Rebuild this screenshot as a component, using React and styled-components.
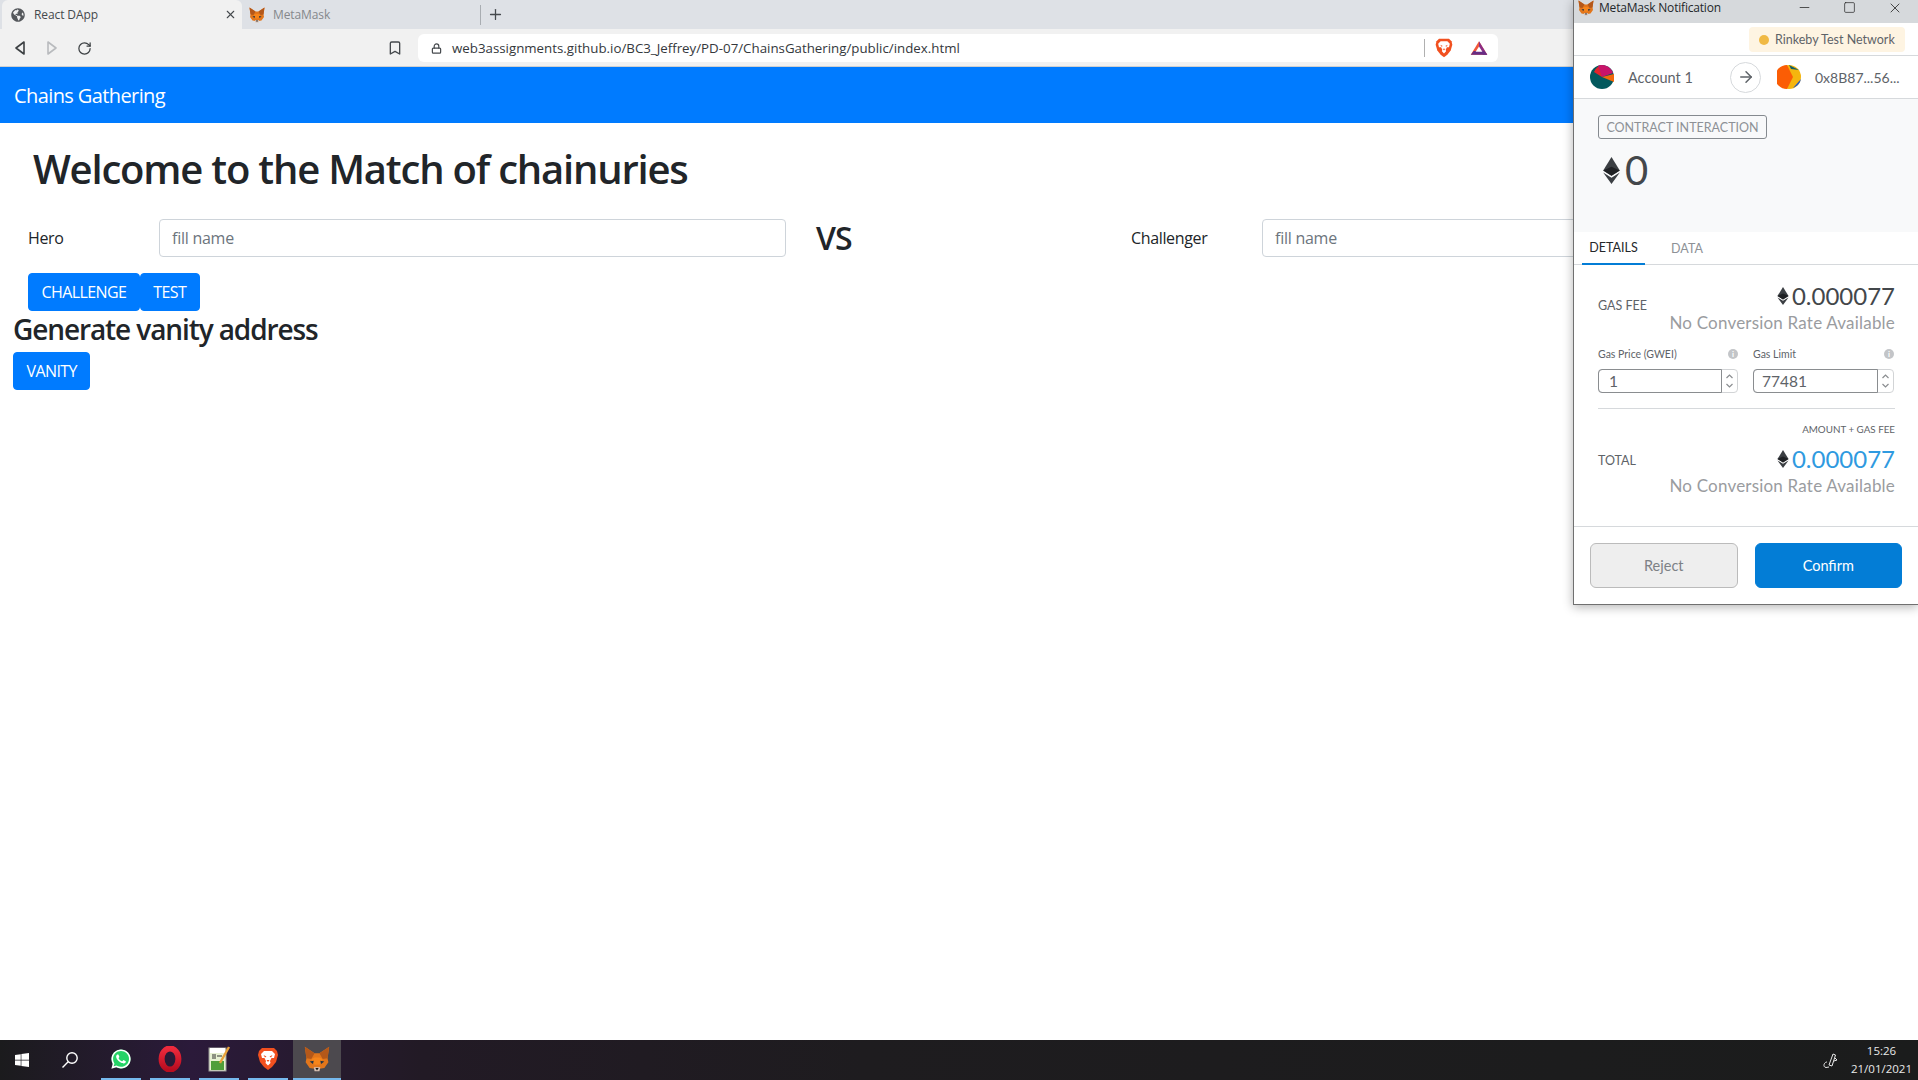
import React from "react";
import styled, { createGlobalStyle } from "styled-components";
import { FaGlobeAmericas, FaWhatsapp, FaWindows } from "react-icons/fa";
import { ArrowRight, Bookmark, Lock, Minus, Plus, RotateCw, Square, X } from "lucide-react";

const GlobalStyle = createGlobalStyle`
  html, body {
    margin: 0;
    padding: 0;
    background: #fff;
  }
  * {
    box-sizing: border-box;
  }
`;

const uiFont = `"Open Sans", "Noto Sans", sans-serif`;
const mmFont = `Lato, "Noto Sans", sans-serif`;

const Page = styled.div`
  width: 1918px;
  height: 1080px;
  position: relative;
  overflow: hidden;
  display: flex;
  flex-direction: column;
  font-family: ${uiFont};
  color: #212529;
`;

const TabBar = styled.div`
  height: 29px;
  background: #dee1e6;
  display: flex;
  align-items: stretch;
  padding-left: 2px;
  font-size: 12px;
  letter-spacing: -0.1px;
`;

const Tab = styled.div`
  width: ${(p) => p.$width}px;
  display: flex;
  align-items: center;
  gap: ${(p) => p.$gap}px;
  padding: 0 5px 0 ${(p) => p.$pad}px;
  color: ${(p) => (p.$active ? "#45494d" : "#85888c")};
  background: ${(p) => (p.$active ? "#f1f1f1" : "transparent")};
  border-radius: 6px 6px 0 0;
`;

const TabTitle = styled.span`
  flex: 1;
`;

const TabSep = styled.div`
  width: 1px;
  height: 20px;
  margin: 5px 6px 0 0;
  background: #a9adb2;
`;

const NewTab = styled.div`
  display: flex;
  align-items: center;
  color: #45494d;
`;

const Toolbar = styled.div`
  height: 38px;
  background: #f1f1f1;
  border-bottom: 1px solid #d0d0d0;
  display: flex;
  align-items: center;
  padding: 1px 0 0 13px;
`;

const NavIcons = styled.div`
  display: flex;
  align-items: center;
  gap: 18px;
  color: #3c4043;
`;

const BookmarkWrap = styled.div`
  margin-left: 295px;
  width: 31px;
  display: flex;
  color: #45494d;
`;

const AddressBox = styled.div`
  width: 1080px;
  height: 28px;
  background: #fff;
  border-radius: 6px;
  display: flex;
  align-items: center;
  padding: 0 10px 0 13px;
  font-size: 13.3px;
  color: #34383c;
  gap: 8px;
`;

const Url = styled.span`
  flex: 1;
  padding-left: 2px;
`;

const AddrSep = styled.div`
  width: 1px;
  height: 18px;
  background: #b0b0b0;
  margin-right: 1px;
`;

const AddrIcons = styled.div`
  display: flex;
  align-items: center;
  gap: 16px;
`;

const NavBar = styled.div`
  height: 56px;
  background: #007bff;
  color: #fff;
  font-size: 20px;
  letter-spacing: -0.6px;
  display: flex;
  align-items: center;
  padding: 0 14px;
`;

const Content = styled.main`
  flex: 1;
  padding: 0 13px;
`;

const Title = styled.h1`
  margin: 0;
  padding: 22px 0 0 20px;
  font-size: 40px;
  line-height: 48px;
  font-weight: 600;
  letter-spacing: -1.2px;
`;

const MatchRow = styled.div`
  display: grid;
  grid-template-columns: 131px 627px 345px 131px 627px;
  align-items: center;
  height: 38px;
  margin: 23px 0 0 15px;
  font-size: 16px;
  letter-spacing: -0.35px;
`;

const FieldLabel = styled.label`
  display: block;
`;

const NameInput = styled.input`
  width: 100%;
  height: 38px;
  padding: 6px 12px;
  font-family: ${uiFont};
  font-size: 16px;
  letter-spacing: -0.25px;
  color: #495057;
  border: 1px solid #ced4da;
  border-radius: 4px;
  &::placeholder {
    color: #6c757d;
  }
`;

const Versus = styled.div`
  padding-left: 30px;
  font-size: 32px;
  font-weight: 600;
  letter-spacing: -1px;
`;

const Buttons = styled.div`
  display: flex;
  margin: 19px 0 0 15px;
`;

const Button = styled.button`
  height: 38px;
  padding: 0 12.5px;
  font-family: ${uiFont};
  font-size: 16px;
  letter-spacing: -0.6px;
  color: #fff;
  background: #007bff;
  border: 1px solid #007bff;
  border-radius: 4px;
`;

const SubTitle = styled.h2`
  margin: 0;
  font-size: 28px;
  line-height: 36px;
  font-weight: 600;
  letter-spacing: -1.1px;
`;

const VanityWrap = styled.div`
  margin-top: 5px;
`;

const Taskbar = styled.div`
  height: 40px;
  display: flex;
  align-items: stretch;
  background: linear-gradient(90deg, #1b1b1d 0%, #2b1a3a 10%, #221a25 22%, #1e1c1f 45%, #1b1c1c 100%);
`;

const StartCell = styled.div`
  width: ${(p) => p.$width}px;
  padding-right: ${(p) => p.$trim || 0}px;
  display: flex;
  align-items: center;
  justify-content: center;
  color: #fff;
`;

const TaskApp = styled.div`
  width: ${(p) => (p.$active ? 48 : 40)}px;
  margin-right: ${(p) => (p.$last ? 5 : 9)}px;
  display: flex;
  align-items: center;
  justify-content: center;
  background: ${(p) => (p.$active ? "#4c494e" : "transparent")};
  border-bottom: 2px solid #76b9ed;
`;

const Tray = styled.div`
  margin-left: auto;
  display: flex;
  align-items: center;
  gap: 12px;
  padding-right: 6px;
  color: #e8e8e8;
`;

const Clock = styled.div`
  font-size: 11.5px;
  line-height: 18px;
  text-align: center;
`;

const Popup = styled.aside`
  position: absolute;
  top: 0;
  left: 1573px;
  width: 345px;
  height: 605px;
  display: flex;
  flex-direction: column;
  background: #fff;
  border-left: 1px solid #707070;
  border-bottom: 1px solid #707070;
  box-shadow: 0 2px 10px rgba(0, 0, 0, 0.3);
  font-family: ${mmFont};
`;

const PopupTitle = styled.div`
  height: 23px;
  flex: none;
  background: #d6d9dc;
  display: flex;
  align-items: center;
  padding: 0 0 8px 4px;
  gap: 5px;
  font-family: ${uiFont};
  font-size: 12px;
  letter-spacing: -0.2px;
  color: #24272a;
`;

const TitleText = styled.span`
  flex: 1;
`;

const WindowButtons = styled.div`
  display: flex;
  align-items: center;
  gap: 31px;
  padding-right: 15px;
  color: #222;
`;

const NetworkRow = styled.div`
  height: 33px;
  flex: none;
  display: flex;
  justify-content: flex-end;
  padding: 4px 13px 0 0;
  border-bottom: 1px solid #d6d9dc;
`;

const NetworkPill = styled.div`
  height: 25px;
  width: 156px;
  display: flex;
  align-items: center;
  gap: 6px;
  padding-left: 10px;
  font-size: 12.5px;
  color: #5e6368;
  background: #fef4e2;
  border-radius: 4px;
`;

const NetworkDot = styled.span`
  width: 10px;
  height: 10px;
  border-radius: 50%;
  background: #f0b944;
`;

const AccountRow = styled.div`
  height: 43px;
  flex: none;
  display: flex;
  align-items: center;
  padding-left: 16px;
  border-bottom: 1px solid #d6d9dc;
  font-size: 14.5px;
  color: #5e6368;
`;

const AccountName = styled.span`
  width: ${(p) => p.$width}px;
  margin-left: 14px;
  white-space: nowrap;
`;

const ArrowDot = styled.div`
  width: 31px;
  height: 31px;
  flex: none;
  border: 1px solid #d6d9dc;
  border-radius: 50%;
  background: #fff;
  display: flex;
  align-items: center;
  justify-content: center;
  color: #5e6368;
  margin-right: 16px;
`;

const AddressName = styled(AccountName)`
  font-size: 14px;
`;

const Summary = styled.div`
  height: 133px;
  flex: none;
  padding: 16px 0 0 24px;
  background: #f8f9fa;
`;

const Chip = styled.div`
  width: 169px;
  height: 24px;
  display: flex;
  align-items: center;
  justify-content: center;
  border: 1px solid #858a8f;
  border-radius: 3px;
  font-size: 12.5px;
  color: #8d9196;
`;

const BigAmount = styled.div`
  margin: 7px 0 0 5px;
  display: flex;
  align-items: center;
  gap: 5px;
  font-size: 40px;
  line-height: 48px;
  font-weight: 400;
  color: #43474b;
`;

const PopupTabs = styled.div`
  height: 33px;
  flex: none;
  display: flex;
  padding-left: 8px;
  border-bottom: 1px solid #d6d9dc;
  font-size: 12.5px;
`;

const PopupTab = styled.div`
  width: ${(p) => p.$width}px;
  display: flex;
  align-items: center;
  justify-content: center;
  margin-right: ${(p) => p.$gap || 0}px;
  color: ${(p) => (p.$active ? "#24272a" : "#8d9196")};
  height: 33px;
  border-bottom: ${(p) => (p.$active ? "2px solid #037dd6" : "none")};
`;

const Details = styled.div`
  flex: 1;
  padding: 0 23px 0 24px;
`;

const FeeRow = styled.div`
  display: flex;
  justify-content: space-between;
  align-items: flex-start;
  margin-top: ${(p) => p.$top}px;
`;

const FeeLabel = styled.div`
  font-size: 12.5px;
  color: #5e6368;
  padding-top: ${(p) => p.$pad || 0}px;
`;

const FeeValues = styled.div`
  text-align: right;
`;

const Amount = styled.div`
  display: flex;
  justify-content: flex-end;
  align-items: center;
  gap: 3px;
  height: 27px;
  font-size: 24px;
  color: ${(p) => (p.$accent ? "#2f9ae0" : "#43474b")};
`;

const Rate = styled.div`
  margin-top: 1px;
  font-size: 17px;
  letter-spacing: 0.2px;
  line-height: 26px;
  color: #9a9ca0;
`;

const GasGrid = styled.div`
  display: grid;
  grid-template-columns: 140px 141px;
  column-gap: 15px;
  margin-top: 10px;
`;

const GasLabel = styled.div`
  display: flex;
  justify-content: space-between;
  align-items: center;
  height: 16px;
  font-size: 10.5px;
  color: #5e6368;
`;

const InfoDot = styled.span`
  width: 10px;
  height: 10px;
  border-radius: 50%;
  background: #c3c5c8;
  color: #fff;
  font-size: 8px;
  line-height: 10px;
  font-weight: 700;
  text-align: center;
`;

const GasInput = styled.div`
  height: 24px;
  margin-top: 7px;
  display: flex;
  border: 1px solid #d2d4d6;
  border-radius: 4px;
`;

const GasValue = styled.div`
  flex: 1;
  margin: -1px 0 -1px -1px;
  padding-left: ${(p) => p.$pad}px;
  display: flex;
  align-items: center;
  font-size: 15.5px;
  color: #5e6368;
  border: 1px solid #8a8d90;
  border-radius: 4px 0 0 4px;
`;

const Stepper = styled.div`
  width: 15px;
  display: flex;
  align-items: center;
  justify-content: center;
`;

const Divider = styled.div`
  height: 1px;
  margin-top: 15px;
  background: #d6d9dc;
`;

const SumHint = styled.div`
  margin-top: 14px;
  font-size: 9.8px;
  line-height: 13px;
  text-align: right;
  color: #5e6368;
`;

const PopupFooter = styled.div`
  height: 78px;
  flex: none;
  display: flex;
  gap: 17px;
  padding: 16px 16px 0;
  border-top: 1px solid #d6d9dc;
`;

const FooterButton = styled.button`
  flex: 1;
  height: 45px;
  font-family: ${mmFont};
  font-size: 14.5px;
  border-radius: 6px;
  color: ${(p) => (p.$primary ? "#fff" : "#7d8186")};
  background: ${(p) => (p.$primary ? "#037dd6" : "#eeeeee")};
  border: 1px solid ${(p) => (p.$primary ? "#037dd6" : "#bbbbbb")};
`;

const Fox = ({ size = 16 }) => (
  <svg width={size} height={size} viewBox="0 0 32 32">
    <polygon points="1,1 13,9 19,9 31,1 29,15 30,20 25,27 19,28 13,28 7,27 2,20 3,15" fill="#e2761b" />
    <polygon points="1,1 13,9 9,16 3,15" fill="#b4581a" />
    <polygon points="31,1 19,9 23,16 29,15" fill="#b4581a" />
    <polygon points="9,16 13,14 19,14 23,16 19,23 13,23" fill="#f6851b" />
    <polygon points="7,19 12,18 11,22" fill="#233447" />
    <polygon points="25,19 20,18 21,22" fill="#233447" />
    <polygon points="12,26 20,26 19,31 13,31" fill="#d7c1b3" />
    <polygon points="14,27 18,27 16,30" fill="#161616" />
  </svg>
);

const BraveLion = ({ size = 20 }) => (
  <svg width={size} height={size} viewBox="0 0 24 24">
    <path d="M6 1 H18 L21 4 L22 8 L20 15 L16 20 L12 23 L8 20 L4 15 L2 8 L3 4 Z" fill="#f1501f" />
    <path d="M8 4 H16 L19 7 L18 11 L15.5 11 L14 14 L14.5 16 L12 18.5 L9.5 16 L10 14 L8.5 11 L6 11 L5 7 Z" fill="#fff" />
    <path d="M7.5 8 L10.5 9.5 L9 10.5 Z M16.5 8 L13.5 9.5 L15 10.5 Z" fill="#f1501f" />
    <path d="M10.5 13 H13.5 L12 15 Z" fill="#f1501f" />
  </svg>
);

const BatLogo = () => (
  <svg width="18" height="18" viewBox="0 0 24 24">
    <polygon points="12,3 23,21 1,21" fill="#f0573a" />
    <polygon points="12,3 23,21 17,21 12,12" fill="#8a2e86" />
    <polygon points="1,21 23,21 19,16 5,16" fill="#672d84" />
    <polygon points="12,10 16.5,17 7.5,17" fill="#fff" />
  </svg>
);

const TriangleNav = ({ dir, color }) => (
  <svg width="14" height="16" viewBox="0 0 14 16">
    <polygon
      points={dir === "back" ? "11,2 3,8 11,14" : "3,2 11,8 3,14"}
      fill="none"
      stroke={color}
      strokeWidth="1.6"
      strokeLinejoin="round"
    />
  </svg>
);

const EthIcon = ({ w = 12, h = 18, color = "#3b3f43" }) => (
  <svg width={w} height={h} viewBox="0 0 16 26">
    <polygon points="8,0 16,13 8,18 0,13" fill={color} />
    <polygon points="0,15 8,20 16,15 8,26" fill={color} />
    <polygon points="0,13 8,9.5 16,13 8,18" fill="#1f2124" />
  </svg>
);

const Spin = () => (
  <svg width="9" height="18" viewBox="0 0 9 18" fill="none" stroke="#8a8d90" strokeWidth="1.2">
    <path d="M1.5 6 L4.5 3 L7.5 6" />
    <path d="M1.5 12 L4.5 15 L7.5 12" />
  </svg>
);

const AccountAvatar = () => (
  <svg width="24" height="24" viewBox="0 0 24 24">
    <circle cx="12" cy="12" r="12" fill="#03595d" />
    <path d="M12 12 L4 7 A12 12 0 0 1 12 0 Z" fill="#e3242b" />
    <path d="M12 12 L8 0.7 A12 12 0 0 1 23 8 Z" fill="#c8146a" />
    <path d="M12 12 L24 9 V17 Z" fill="#f2680b" />
  </svg>
);

const ContractAvatar = () => (
  <svg width="24" height="24" viewBox="0 0 24 24">
    <circle cx="12" cy="12" r="12" fill="#f5b50e" />
    <path d="M10 0 A12 12 0 0 0 10 24 L16 12 Z" fill="#fb5d05" />
    <path d="M18 22 A12 12 0 0 0 24 14 L16 23 Z" fill="#2358c4" />
    <path d="M12 0 L22 5 L14 4 Z" fill="#0f5f6a" />
  </svg>
);

const SearchIcon = () => (
  <svg width="18" height="18" viewBox="0 0 18 18" fill="none" stroke="#fff" strokeWidth="1.4">
    <circle cx="11" cy="7" r="5.2" />
    <path d="M7.2 10.8 L1.5 16.5" />
  </svg>
);

const WhatsApp = () => (
  <svg width="22" height="22" viewBox="0 0 22 22">
    <circle cx="11" cy="11" r="9.6" fill="#25d366" />
    <foreignObject width="22" height="22">
      <FaWhatsapp size={22} color="#fff" />
    </foreignObject>
  </svg>
);

const Opera = () => (
  <svg width="24" height="26" viewBox="0 0 24 26">
    <defs>
      <linearGradient id="operaRing" x1="0" y1="0" x2="0" y2="1">
        <stop offset="0" stopColor="#ee2a3c" />
        <stop offset="1" stopColor="#b80d20" />
      </linearGradient>
    </defs>
    <ellipse cx="12" cy="13" rx="8.4" ry="10.6" fill="none" stroke="url(#operaRing)" strokeWidth="6" />
  </svg>
);

const NotesIcon = () => (
  <svg width="24" height="26" viewBox="0 0 24 26">
    <rect x="2" y="2" width="17" height="23" fill="#e7f1d2" stroke="#9a9a9a" />
    <rect x="3" y="2" width="15" height="5" fill="#fff" />
    <rect x="4" y="15" width="13" height="9" fill="#4f9e3a" />
    <path d="M6 8 V13 M8 8 V13 M10 10 H15" stroke="#333" strokeWidth="1" />
    <path d="M22 1 L13 17" stroke="#e8a23a" strokeWidth="2.4" />
  </svg>
);

const PenIcon = () => (
  <svg width="17" height="17" viewBox="0 0 17 17" fill="none" stroke="#e8e8e8" strokeWidth="1">
    <path d="M7 13 L11 2 L13.5 3 L10 14 Z" />
    <path d="M13 6 L15 8 L12 9" />
    <path d="M5 10 C2 10 0.5 15 4 15.5 L7 15" />
  </svg>
);

const App = () => {
  return (
    <Page>
      <GlobalStyle />
      <TabBar>
        <Tab $active $width={240} $pad={9} $gap={9}>
          <FaGlobeAmericas size={14} color="#55585c" />
          <TabTitle>React DApp</TabTitle>
          <X size={13} strokeWidth={2} />
        </Tab>
        <Tab $width={238} $pad={7} $gap={8}>
          <Fox size={16} />
          <TabTitle>MetaMask</TabTitle>
        </Tab>
        <TabSep />
        <NewTab>
          <Plus size={17} strokeWidth={1.8} />
        </NewTab>
      </TabBar>
      <Toolbar>
        <NavIcons>
          <TriangleNav dir="back" color="#3c4043" />
          <TriangleNav dir="forward" color="#b9bbbe" />
          <RotateCw size={15} strokeWidth={2} />
        </NavIcons>
        <BookmarkWrap>
          <Bookmark size={16} strokeWidth={2} />
        </BookmarkWrap>
        <AddressBox>
          <Lock size={11} strokeWidth={2.6} color="#45494d" />
          <Url>web3assignments.github.io/BC3_Jeffrey/PD-07/ChainsGathering/public/index.html</Url>
          <AddrSep />
          <AddrIcons>
            <BraveLion size={20} />
            <BatLogo />
          </AddrIcons>
        </AddressBox>
      </Toolbar>
      <NavBar>Chains Gathering</NavBar>
      <Content>
        <Title>Welcome to the Match of chainuries</Title>
        <MatchRow>
          <FieldLabel>Hero</FieldLabel>
          <NameInput placeholder="fill name" />
          <Versus>VS</Versus>
          <FieldLabel>Challenger</FieldLabel>
          <NameInput placeholder="fill name" />
        </MatchRow>
        <Buttons>
          <Button>CHALLENGE</Button>
          <Button>TEST</Button>
        </Buttons>
        <SubTitle>Generate vanity address</SubTitle>
        <VanityWrap>
          <Button>VANITY</Button>
        </VanityWrap>
      </Content>
      <Taskbar>
        <StartCell $width={44}>
          <FaWindows size={16} />
        </StartCell>
        <StartCell $width={57} $trim={5}>
          <SearchIcon />
        </StartCell>
        <TaskApp>
          <WhatsApp />
        </TaskApp>
        <TaskApp>
          <Opera />
        </TaskApp>
        <TaskApp>
          <NotesIcon />
        </TaskApp>
        <TaskApp $last>
          <BraveLion size={24} />
        </TaskApp>
        <TaskApp $active>
          <Fox size={26} />
        </TaskApp>
        <Tray>
          <PenIcon />
          <Clock>
            15:26
            <br />
            21/01/2021
          </Clock>
        </Tray>
      </Taskbar>

      <Popup>
        <PopupTitle>
          <Fox size={16} />
          <TitleText>MetaMask Notification</TitleText>
          <WindowButtons>
            <Minus size={15} strokeWidth={1.2} />
            <Square size={13} strokeWidth={1.3} />
            <X size={16} strokeWidth={1.2} />
          </WindowButtons>
        </PopupTitle>
        <NetworkRow>
          <NetworkPill>
            <NetworkDot />
            Rinkeby Test Network
          </NetworkPill>
        </NetworkRow>
        <AccountRow>
          <AccountAvatar />
          <AccountName $width={102}>Account 1</AccountName>
          <ArrowDot>
            <ArrowRight size={18} strokeWidth={2} />
          </ArrowDot>
          <ContractAvatar />
          <AddressName $width={80}>0x8B87...56...</AddressName>
        </AccountRow>
        <Summary>
          <Chip>CONTRACT INTERACTION</Chip>
          <BigAmount>
            <EthIcon w={17} h={27} />0
          </BigAmount>
        </Summary>
        <PopupTabs>
          <PopupTab $active $width={63} $gap={12}>
            DETAILS
          </PopupTab>
          <PopupTab $width={60}>DATA</PopupTab>
        </PopupTabs>
        <Details>
          <FeeRow $top={17}>
            <FeeLabel $pad={16}>GAS FEE</FeeLabel>
            <FeeValues>
              <Amount>
                <EthIcon />
                0.000077
              </Amount>
              <Rate>No Conversion Rate Available</Rate>
            </FeeValues>
          </FeeRow>
          <GasGrid>
            <div>
              <GasLabel>
                Gas Price (GWEI)
                <InfoDot>i</InfoDot>
              </GasLabel>
              <GasInput>
                <GasValue $pad={10}>1</GasValue>
                <Stepper>
                  <Spin />
                </Stepper>
              </GasInput>
            </div>
            <div>
              <GasLabel>
                Gas Limit
                <InfoDot>i</InfoDot>
              </GasLabel>
              <GasInput>
                <GasValue $pad={8}>77481</GasValue>
                <Stepper>
                  <Spin />
                </Stepper>
              </GasInput>
            </div>
          </GasGrid>
          <Divider />
          <SumHint>AMOUNT + GAS FEE</SumHint>
          <FeeRow $top={9}>
            <FeeLabel $pad={8}>TOTAL</FeeLabel>
            <FeeValues>
              <Amount $accent>
                <EthIcon />
                0.000077
              </Amount>
              <Rate>No Conversion Rate Available</Rate>
            </FeeValues>
          </FeeRow>
        </Details>
        <PopupFooter>
          <FooterButton>Reject</FooterButton>
          <FooterButton $primary>Confirm</FooterButton>
        </PopupFooter>
      </Popup>
    </Page>
  );
};

export default App;
